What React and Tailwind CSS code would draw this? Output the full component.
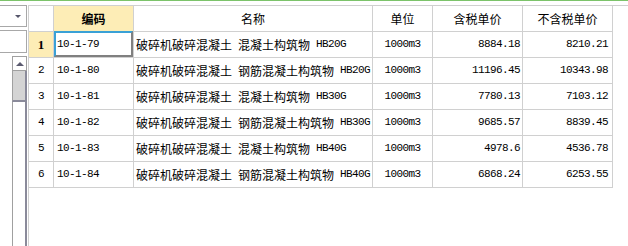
import React from "react";

const rows = [
  ["1", "10-1-79", "破碎机破碎混凝土 混凝土构筑物 HB20G", "1000m3", "8884.18", "8210.21"],
  ["2", "10-1-80", "破碎机破碎混凝土 钢筋混凝土构筑物 HB20G", "1000m3", "11196.45", "10343.98"],
  ["3", "10-1-81", "破碎机破碎混凝土 混凝土构筑物 HB30G", "1000m3", "7780.13", "7103.12"],
  ["4", "10-1-82", "破碎机破碎混凝土 钢筋混凝土构筑物 HB30G", "1000m3", "9685.57", "8839.45"],
  ["5", "10-1-83", "破碎机破碎混凝土 混凝土构筑物 HB40G", "1000m3", "4978.6", "4536.78"],
  ["6", "10-1-84", "破碎机破碎混凝土 钢筋混凝土构筑物 HB40G", "1000m3", "6868.24", "6253.55"],
];

const cjk = "font-['Noto_Sans_CJK_SC',sans-serif] text-[12px]";
const mono = "font-['Liberation_Mono',monospace] text-[11px] tracking-[-0.6px]";

// split a label into CJK runs and ascii runs so each gets its own font
function Mixed({ text }) {
  const parts = text.match(/[\u4e00-\u9fff]+|[^\u4e00-\u9fff]+/g) || [];
  return parts.map((p, i) =>
    /[\u4e00-\u9fff]/.test(p) ? (
      <span key={i} className={cjk}>{p}</span>
    ) : (
      <span key={i} className={mono}>{p}</span>
    )
  );
}

const cell = "h-[26px] border-b border-r border-[#d0d0d0] flex items-center whitespace-pre text-black leading-none";

function LeftPanel() {
  return (
    <div className="w-[28px] flex flex-col shrink-0">
      <div className="h-[22px] w-[27px] border-t border-b border-r border-[#a8a8a8] flex items-center justify-end pr-[5px]">
        <div className="w-0 h-0 border-l-[3px] border-r-[3px] border-t-[3px] border-l-transparent border-r-transparent border-t-[#55556a]" />
      </div>
      <div className="mt-[3px] h-[23px] w-[27px] border-t border-b border-r border-[#a8a8a8]" />
      <div className="mt-[3px] ml-[12px] w-[15px] flex-1 flex flex-col">
        <div className="h-[15px] border border-[#a0a0a0] bg-white flex items-center justify-center">
          <div className="w-0 h-0 border-l-[4px] border-r-[4px] border-b-[4px] border-l-transparent border-r-transparent border-b-[#5b5b70]" />
        </div>
        <div className="h-[31px] bg-[#d4d4d4] border-l border-r-2 border-b-2 border-l-[#a0a0a0] border-r-[#8a8a9a] border-b-[#8a8a9a]" />
        <div className="flex-1 border-l border-r-2 border-l-[#a0a0a0] border-r-[#8a8a9a]" />
      </div>
    </div>
  );
}

export default function App() {
  return (
    <div className="w-[628px] h-[246px] bg-white flex flex-col overflow-hidden">
      <div className="h-px bg-[#7cc36a]" />
      <div className="flex flex-1 pt-[4px]">
        <LeftPanel />
        <div className="flex-1 border-l border-t border-[#d0d0d0]">
          <div className="grid grid-cols-[25px_80px_239px_60px_90px_90px] w-max">
            <div className={cell} />
            <div className={`${cell} justify-center bg-[#fdedb6]`}>
              <span className={`${cjk} font-bold`}>编码</span>
            </div>
            <div className={`${cell} justify-center`}><span className={cjk}>名称</span></div>
            <div className={`${cell} justify-center`}><span className={cjk}>单位</span></div>
            <div className={`${cell} justify-center`}><span className={cjk}>含税单价</span></div>
            <div className={`${cell} justify-center`}><span className={cjk}>不含税单价</span></div>

            {rows.map((r, i) => (
              <React.Fragment key={r[0]}>
                <div className={`${cell} justify-center ${i === 0 ? "bg-[#fdedb6]" : ""}`}>
                  <span className={`${i === 0 ? "font-['Liberation_Serif',serif] text-[13px] font-bold" : mono}`}>{r[0]}</span>
                </div>
                <div className={`${cell} pl-[3px] relative`}>
                  <span className={mono}>{r[1]}</span>
                  {i === 0 && (
                    <div className="absolute left-0 right-0 -top-px bottom-0 border-2 border-t-[#3aa1d6] border-l-[#3aa1d6] border-b-[#808080] border-r-[#808080]" />
                  )}
                </div>
                <div className={`${cell} pl-[2px]`}><Mixed text={r[2]} /></div>
                <div className={`${cell} justify-center`}><span className={mono}>{r[3]}</span></div>
                <div className={`${cell} justify-end pr-[2px]`}><span className={mono}>{r[4]}</span></div>
                <div className={`${cell} justify-end pr-[4px]`}><span className={mono}>{r[5]}</span></div>
              </React.Fragment>
            ))}
          </div>
        </div>
      </div>
    </div>
  );
}
